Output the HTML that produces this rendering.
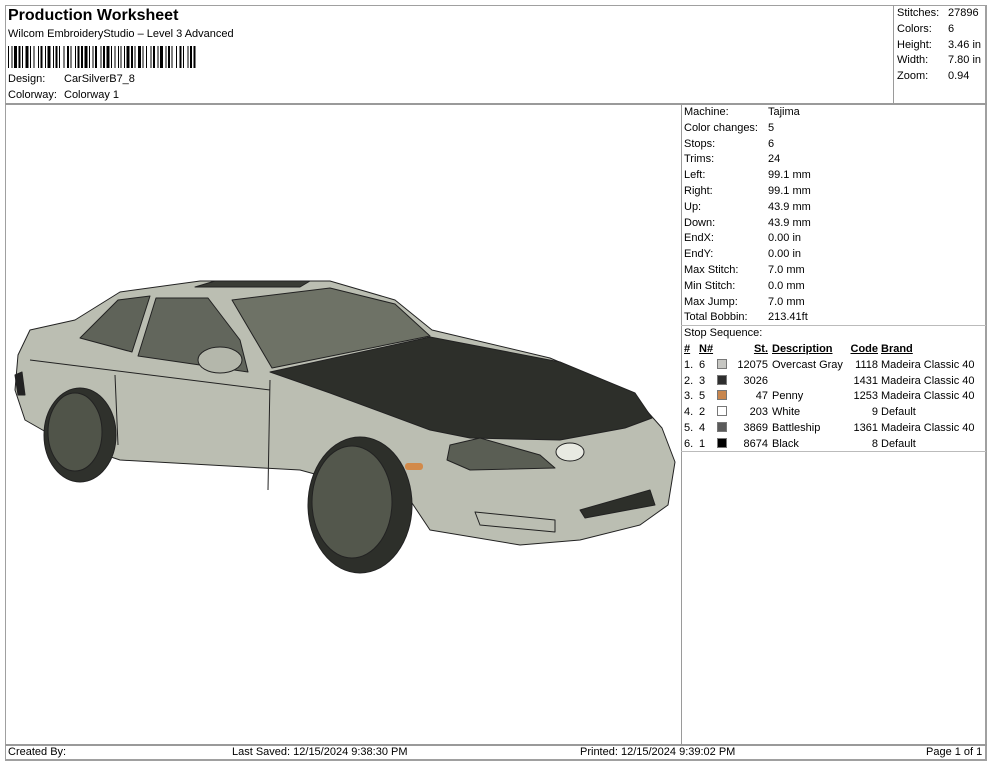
<!DOCTYPE html>
<html><head><meta charset="utf-8"><style>
*{margin:0;padding:0;box-sizing:border-box}
body{width:990px;height:762px;background:#fff;font-family:"Liberation Sans",Arial,sans-serif;font-size:11px;color:#000;position:relative;overflow:hidden}
.abs{position:absolute}
.line{position:absolute;background:#9a9a9a}
.t{position:absolute;white-space:nowrap;line-height:13px}
.tbl td{padding:0;height:15.8px;line-height:15.8px;white-space:nowrap}
u{text-decoration:underline}
.sw{display:inline-block;width:10px;height:10px;border:1px solid #777;vertical-align:-1px}
</style></head><body>
<div class="abs" style="left:5px;top:5px;width:982px;height:756px;border:2px solid #a0a0a0;border-left-width:1px;border-top-width:1px"></div>
<div class="line" style="left:5px;top:103px;width:982px;height:2px"></div>
<div class="line" style="left:893px;top:5px;width:1px;height:99px"></div>
<div class="line" style="left:681px;top:104px;width:1px;height:641px"></div>
<div class="line" style="left:5px;top:744px;width:982px;height:2px"></div>
<div class="line" style="left:681px;top:325px;width:305px;height:1px;background:#bbb"></div>
<div class="line" style="left:681px;top:451px;width:305px;height:1px;background:#bbb"></div>

<div class="t" style="left:8px;top:7px;font-size:16px;font-weight:bold;line-height:18px">Production Worksheet</div>
<div class="t" style="left:8px;top:28px">Wilcom EmbroideryStudio – Level 3 Advanced</div>
<svg class="abs" style="left:8px;top:46px" width="190" height="22" id="bc"></svg>
<div class="t" style="left:8px;top:73px">Design:</div><div class="t" style="left:64px;top:73px">CarSilverB7_8</div>
<div class="t" style="left:8px;top:89px">Colorway:</div><div class="t" style="left:64px;top:89px">Colorway 1</div>

<div class="t" style="left:897px;top:6px;line-height:15.8px">Stitches:<br>Colors:<br>Height:<br>Width:<br>Zoom:</div>
<div class="t" style="left:948px;top:6px;line-height:15.8px">27896<br>6<br>3.46 in<br>7.80 in<br>0.94</div>

<div class="t" style="left:684px;top:105px;line-height:15.8px">Machine:<br>Color changes:<br>Stops:<br>Trims:<br>Left:<br>Right:<br>Up:<br>Down:<br>EndX:<br>EndY:<br>Max Stitch:<br>Min Stitch:<br>Max Jump:<br>Total Bobbin:</div>
<div class="t" style="left:768px;top:105px;line-height:15.8px">Tajima<br>5<br>6<br>24<br>99.1 mm<br>99.1 mm<br>43.9 mm<br>43.9 mm<br>0.00 in<br>0.00 in<br>7.0 mm<br>0.0 mm<br>7.0 mm<br>213.41ft</div>
<div class="t" style="left:684px;top:327px">Stop Sequence:</div>
<table class="tbl abs" style="left:684px;top:342px;border-collapse:collapse">
<tr style="font-weight:bold"><td style="width:15px"><u>#</u></td><td style="width:18px"><u>N#</u></td><td style="width:16px"></td><td style="width:35px;text-align:right"><u>St.</u></td><td style="width:76px;padding-left:4px"><u>Description</u></td><td style="width:34px;text-align:right"><u>Code</u></td><td style="padding-left:3px"><u>Brand</u></td></tr>
<tr><td>1.</td><td>6</td><td><span class="sw" style="background:#c6c6c2"></span></td><td style="text-align:right">12075</td><td style="padding-left:4px">Overcast Gray</td><td style="text-align:right">1118</td><td style="padding-left:3px">Madeira Classic 40</td></tr>
<tr><td>2.</td><td>3</td><td><span class="sw" style="background:#2e2e2e"></span></td><td style="text-align:right">3026</td><td></td><td style="text-align:right">1431</td><td style="padding-left:3px">Madeira Classic 40</td></tr>
<tr><td>3.</td><td>5</td><td><span class="sw" style="background:#c8864e"></span></td><td style="text-align:right">47</td><td style="padding-left:4px">Penny</td><td style="text-align:right">1253</td><td style="padding-left:3px">Madeira Classic 40</td></tr>
<tr><td>4.</td><td>2</td><td><span class="sw" style="background:#fff"></span></td><td style="text-align:right">203</td><td style="padding-left:4px">White</td><td style="text-align:right">9</td><td style="padding-left:3px">Default</td></tr>
<tr><td>5.</td><td>4</td><td><span class="sw" style="background:#5a5a5a"></span></td><td style="text-align:right">3869</td><td style="padding-left:4px">Battleship</td><td style="text-align:right">1361</td><td style="padding-left:3px">Madeira Classic 40</td></tr>
<tr><td>6.</td><td>1</td><td><span class="sw" style="background:#000"></span></td><td style="text-align:right">8674</td><td style="padding-left:4px">Black</td><td style="text-align:right">8</td><td style="padding-left:3px">Default</td></tr>
</table>

<div class="t" style="left:8px;top:746px">Created By:</div>
<div class="t" style="left:232px;top:746px">Last Saved: 12/15/2024 9:38:30 PM</div>
<div class="t" style="left:580px;top:746px">Printed: 12/15/2024 9:39:02 PM</div>
<div class="t" style="left:926px;top:746px">Page 1 of 1</div>

<svg class="abs" style="left:0;top:0" width="990" height="762">
<g stroke="#222" stroke-width="1" stroke-linejoin="round">
<path d="M18,355 L30,330 L75,320 L120,292 L200,281 L330,281 L395,300 L432,330 L550,358 L630,392 L662,428 L675,462 L668,505 L640,525 L580,540 L520,545 L430,530 L410,500 L300,470 L120,460 L60,440 L25,420 L15,390 Z" fill="#bbbeb2"/>
<path d="M80,338 L118,300 L150,296 L132,352 Z" fill="#5f6359"/>
<path d="M138,356 L156,298 L208,298 L240,340 L248,372 Z" fill="#62665c"/>
<path d="M232,300 L330,288 L395,304 L430,336 L272,368 Z" fill="#6e7266"/>
<path d="M195,287 L215,281 L310,281 L300,287 Z" fill="#3a3c36"/>
<path d="M270,372 L430,337 L560,362 L635,393 L652,418 L625,428 L560,440 L470,438 L430,430 L330,393 Z" fill="#2d2f2a"/>
<path d="M115,375 L118,445 M270,380 L268,490 M30,360 L270,390" fill="none"/>
<ellipse cx="220" cy="360" rx="22" ry="13" fill="#b4b7ab"/>
<ellipse cx="80" cy="435" rx="36" ry="47" fill="#2f312c"/>
<ellipse cx="75" cy="432" rx="27" ry="39" fill="#505449"/>
<ellipse cx="360" cy="505" rx="52" ry="68" fill="#2d2f2a"/>
<ellipse cx="352" cy="502" rx="40" ry="56" fill="#53574c"/>
<path d="M450,445 L480,438 L540,455 L555,468 L470,470 L447,460 Z" fill="#5a5e54"/>
<ellipse cx="570" cy="452" rx="14" ry="9" fill="#e8eae2"/>
<rect x="405" y="463" width="18" height="7" rx="3" fill="#d28a4a" stroke="none"/>
<path d="M580,510 L650,490 L655,505 L585,518 Z" fill="#2d2f2a"/>
<path d="M475,512 L555,520 L555,532 L480,525 Z" fill="none"/>
<path d="M15,375 L22,372 L25,395 L18,395 Z" fill="#222"/>
</g>
</svg>
<script>
var s=document.getElementById('bc'),x=0,p=[1,2,1,1,3,1,2,1,1,2,3,1,1,2,1,3,1,1,2,2,1,1,3,2,1,1,2,1,1,3,1,2,2,1,1,3,1,1,2,1,2,1,3,1,1,2,1,1,2,3,1,1,2,1,3,1,1,2,1,2,1,1];var h='',i=0;
while(x<186){var w=p[i%p.length];if(i%2==0)h+='<rect x="'+x+'" y="0" width="'+w+'" height="22" fill="#000"/>';x+=w+(i%2==0?0:0.5);i++;}
s.innerHTML=h;
</script>
</body></html>
